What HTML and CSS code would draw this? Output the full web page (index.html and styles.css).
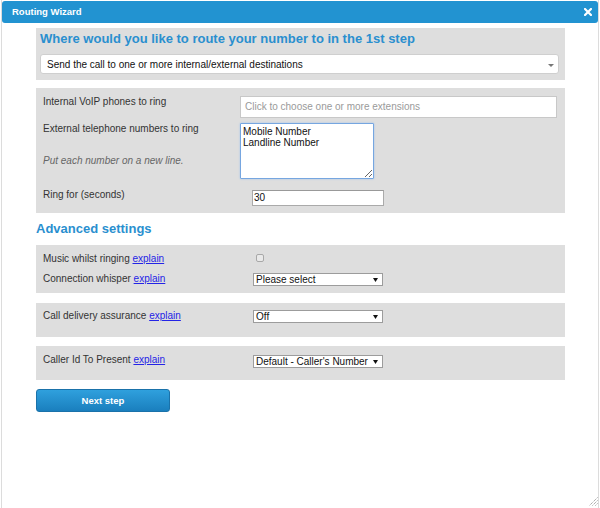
FILE: index.html
```html
<!DOCTYPE html>
<html lang="en">
<head>
<meta charset="utf-8">
<title>Routing Wizard</title>
<link rel="stylesheet" href="styles.css">
</head>
<body>
<div class="dialog">
  <div class="titlebar">
    <span class="title">Routing Wizard</span>
    <svg class="close" width="8" height="8" viewBox="0 0 8 8"><path d="M1 1L7 7M7 1L1 7" stroke="#fff" stroke-width="2.2" stroke-linecap="square"/></svg>
  </div>
  <div class="content">
    <section class="panel panel-step">
      <h2 class="heading">Where would you like to route your number to in the 1st step</h2>
      <div class="big-select">
        <span>Send the call to one or more internal/external destinations</span>
        <svg class="caret" width="6" height="3" viewBox="0 0 6 3"><path d="M0 0H6L3 3Z" fill="#777"/></svg>
      </div>
    </section>

    <section class="panel panel-dest">
      <div class="row">
        <label class="label w1">Internal VoIP phones to ring</label>
        <div class="ext-input">Click to choose one or more extensions</div>
      </div>
      <div class="row row-ext">
        <div class="label-col w1">
          <label class="label">External telephone numbers to ring</label>
          <p class="note">Put each number on a new line.</p>
        </div>
        <textarea class="numbers">Mobile Number
Landline Number</textarea>
      </div>
      <div class="row row-ring">
        <label class="label w2">Ring for (seconds)</label>
        <div class="ring-input">30</div>
      </div>
    </section>

    <h3 class="heading adv-heading">Advanced settings</h3>

    <section class="panel panel-adv">
      <div class="row">
        <span class="label w3">Music whilst ringing <a href="#" class="explain">explain</a></span>
        <span class="checkbox"></span>
      </div>
      <div class="row row-second">
        <span class="label w3">Connection whisper <a href="#" class="explain">explain</a></span>
        <div class="small-select"><span>Please select</span><svg class="arrow" width="5" height="4" viewBox="0 0 5 4"><path d="M0 0H5L2.5 4Z" fill="#111"/></svg></div>
      </div>
    </section>

    <section class="panel panel-cda">
      <div class="row">
        <span class="label w3">Call delivery assurance <a href="#" class="explain">explain</a></span>
        <div class="small-select"><span>Off</span><svg class="arrow" width="5" height="4" viewBox="0 0 5 4"><path d="M0 0H5L2.5 4Z" fill="#111"/></svg></div>
      </div>
    </section>

    <section class="panel panel-cid">
      <div class="row">
        <span class="label w3">Caller Id To Present <a href="#" class="explain">explain</a></span>
        <div class="small-select sel-offset"><span>Default - Caller's Number</span><svg class="arrow" width="5" height="4" viewBox="0 0 5 4"><path d="M0 0H5L2.5 4Z" fill="#111"/></svg></div>
      </div>
    </section>

    <button class="next" type="button">Next step</button>
  </div>
  <svg class="grip" width="9" height="9" viewBox="0 0 9 9">
    <path d="M8.5 0.5L0.5 8.5M8.5 3.5L3.5 8.5M8.5 6.5L6.5 8.5" stroke="#888" stroke-width="1" stroke-dasharray="1 1"/>
  </svg>
</div>
</body>
</html>
```

FILE: styles.css
```css
html, body {
  margin: 0;
  padding: 0;
  background: #fff;
}

body {
  font-family: "Liberation Sans", Arial, sans-serif;
  font-size: 10px;
  color: #333;
}

.dialog {
  position: relative;
  box-sizing: border-box;
  width: 598px;
  height: 508px;
  margin-left: 1px;
  padding-top: 1px;
  border-left: 1px solid #dcdcdc;
  border-right: 1px solid #dcdcdc;
  background: #fff;
}

.titlebar {
  display: flex;
  align-items: center;
  justify-content: space-between;
  height: 22px;
  padding: 0 6px 0 10px;
  background: #2293d1;
  border-radius: 3px;
  color: #fff;
}

.title {
  font-weight: bold;
  font-size: 9.5px;
  line-height: 22px;
}

.close {
  display: block;
}

.content {
  padding: 5px 0 0 34px;
}

.panel {
  box-sizing: border-box;
  width: 529px;
  background: #dedede;
}

.heading {
  margin: 0;
  font-weight: bold;
  font-size: 13px;
  line-height: 16px;
  color: #2a8fcf;
}

.panel-step {
  height: 52px;
  padding: 3px 6px 0 4px;
}

.big-select {
  display: flex;
  align-items: center;
  justify-content: space-between;
  box-sizing: border-box;
  height: 20px;
  margin-top: 7px;
  padding: 0 4px 0 6px;
  background: #fff;
  border: 1px solid #cfcfcf;
  border-radius: 3px;
  color: #111;
  font-size: 10px;
}

.caret {
  display: block;
  margin-top: 3px;
}

.row {
  display: flex;
  align-items: flex-start;
}

.label {
  flex: none;
  font-size: 10px;
  line-height: 12px;
  color: #333;
}

.w1 { width: 197px; }
.w2 { width: 209px; }
.w3 { width: 210px; }

.panel-dest {
  margin-top: 8px;
  padding: 8px 8px 7px 7px;
}

.ext-input {
  flex: 1;
  box-sizing: border-box;
  height: 22px;
  padding-left: 4px;
  background: #fff;
  border: 1px solid #c8c8c8;
  color: #9a9a9a;
  font-size: 10px;
  line-height: 20px;
}

.row-ext {
  margin-top: 5px;
}

.label-col {
  flex: none;
}

.note {
  margin: 20px 0 0;
  font-size: 10px;
  line-height: 12px;
  font-style: italic;
  color: #666;
}

.numbers {
  box-sizing: border-box;
  width: 134px;
  height: 56px;
  margin: 0;
  padding: 2px 2px;
  border: 1px solid #76a6e0;
  box-shadow: 0 0 2px #9cc0ee;
  border-radius: 1px;
  font-family: "Liberation Sans", Arial, sans-serif;
  font-size: 10px;
  line-height: 11px;
  color: #111;
  outline: none;
}

.row-ring {
  margin-top: 10px;
}

.ring-input {
  box-sizing: border-box;
  width: 132px;
  height: 16px;
  margin-top: 1px;
  padding-left: 1px;
  background: #fff;
  border: 1px solid #aaa;
  border-top-color: #999;
  color: #111;
  font-size: 10px;
  line-height: 14px;
}

.adv-heading {
  margin: 8px 0;
}

.panel-adv {
  height: 48px;
  padding: 8px 7px 0;
}

.row-second {
  margin-top: 8px;
}

.checkbox {
  box-sizing: border-box;
  width: 8px;
  height: 8px;
  margin: 1px 0 0 3px;
  border: 1px solid #a8a8a8;
  border-radius: 2px;
  background: #e9e9e9;
}

.explain {
  color: #2424e6;
  text-decoration: underline;
}

.small-select {
  display: flex;
  align-items: center;
  justify-content: space-between;
  box-sizing: border-box;
  width: 130px;
  height: 13px;
  padding: 0 4px 0 2px;
  background: #fff;
  border: 1px solid #9c9c9c;
  color: #111;
  font-size: 10px;
  line-height: 11px;
}

.arrow {
  display: block;
}

.panel-cda {
  height: 34px;
  margin-top: 10px;
  padding: 7px 7px 0;
}

.panel-cid {
  height: 34px;
  margin-top: 9px;
  padding: 8px 7px 0;
}

.sel-offset {
  margin-top: 1px;
}

.next {
  display: block;
  box-sizing: border-box;
  width: 134px;
  height: 23px;
  margin-top: 9px;
  padding: 0;
  border: 1px solid #1a72aa;
  border-radius: 3px;
  background: linear-gradient(#2fa0dd, #1a7fbe);
  color: #fff;
  font-family: "Liberation Sans", Arial, sans-serif;
  font-weight: bold;
  font-size: 9.5px;
  cursor: pointer;
}

.grip {
  position: absolute;
  right: 0;
  bottom: 2px;
}
```
